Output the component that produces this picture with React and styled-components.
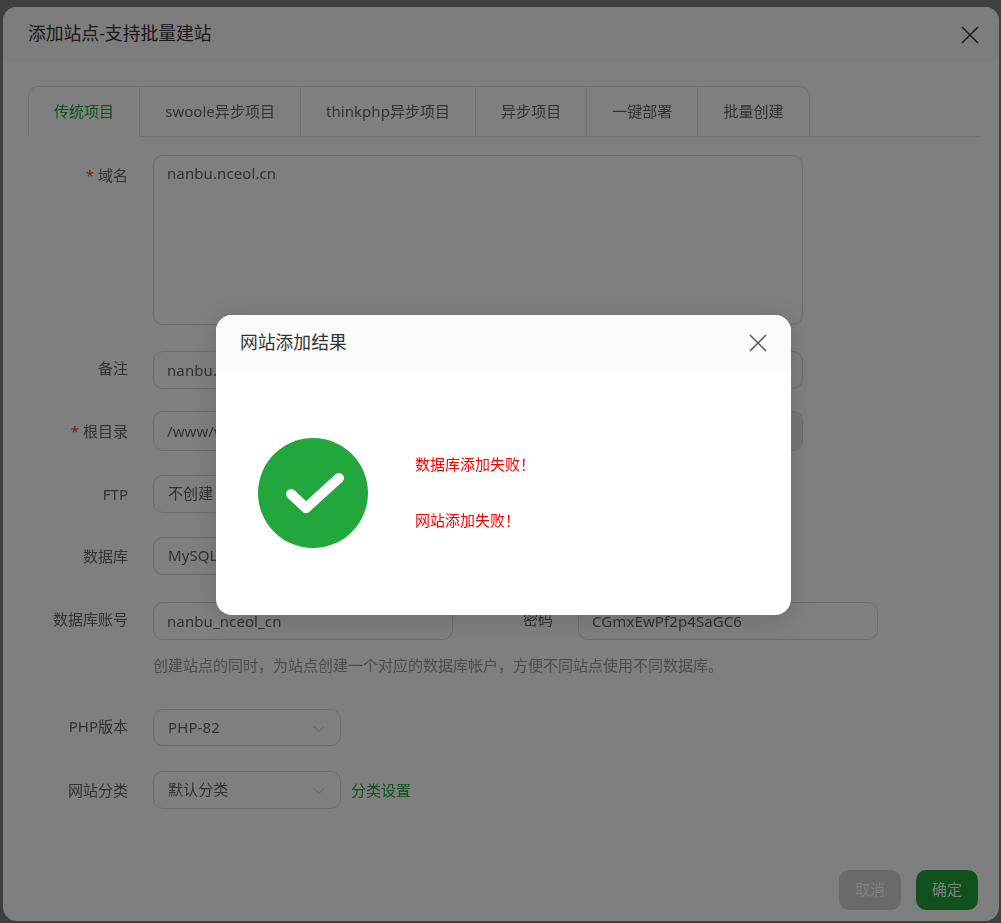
import React from "react";
import styled, { createGlobalStyle } from "styled-components";

const GlobalStyle = createGlobalStyle`
  html, body {
    margin: 0;
    height: 100%;
    background: #fff;
    font-family: "Noto Sans", "Noto Sans CJK SC", sans-serif;
    font-size: 15px;
    line-height: 20px;
    overflow: hidden;
  }
  * { box-sizing: border-box; }
`;

const tabs = ["传统项目", "swoole异步项目", "thinkphp异步项目", "异步项目", "一键部署", "批量创建"];

function CloseIcon() {
  return (
    <svg width="18" height="18" viewBox="0 0 18 18" fill="none" stroke="currentColor" strokeWidth="1.5">
      <path d="M1 1 L17 17 M17 1 L1 17" />
    </svg>
  );
}

function Chevron() {
  return (
    <ChevronSvg width="12" height="8" viewBox="0 0 12 8" fill="none" stroke="#c4c4c4" strokeWidth="1">
      <path d="M1 1.5 L6 6.5 L11 1.5" />
    </ChevronSvg>
  );
}

function SuccessIcon() {
  return (
    <svg width="110" height="110" viewBox="0 0 110 110">
      <circle cx="55" cy="55" r="55" fill="#22a73d" />
      <path d="M33 56 L48 70 L81 40" fill="none" stroke="#fff" strokeWidth="10" strokeLinecap="round" strokeLinejoin="round" />
    </svg>
  );
}

export default function App() {
  return (
    <>
      <GlobalStyle />
      <Backdrop>
        <Window>
          <WindowHeader>
            <WindowTitle>添加站点-支持批量建站</WindowTitle>
            <WindowClose><CloseIcon /></WindowClose>
          </WindowHeader>
          <WindowBody>
            <TabBar>
              {tabs.map((t, i) => (
                <Tab key={t} $active={i === 0} $first={i === 0} $last={i === tabs.length - 1}>{t}</Tab>
              ))}
            </TabBar>

            <Row $top={18}>
              <Label $alignTop><Star>*</Star>域名</Label>
              <TextArea>nanbu.nceol.cn</TextArea>
            </Row>
            <Row $top={26}>
              <Label $lift>备注</Label>
              <Input $width={650}>nanbu.nceol.cn</Input>
            </Row>
            <Row $top={22}>
              <Label><Star>*</Star>根目录</Label>
              <Input $width={650} $height={40}>
                /www/wwwroot/nanbu.nceol.cn
                <FolderAddon />
              </Input>
            </Row>
            <Row $top={24}>
              <Label>FTP</Label>
              <Select>不创建<Chevron /></Select>
            </Row>
            <Row $top={24}>
              <Label>数据库</Label>
              <Select>MySQL<Chevron /></Select>
            </Row>
            <Row $top={27}>
              <Label $lift>数据库账号</Label>
              <Input $width={300}>nanbu_nceol_cn</Input>
              <Label $lift>密码</Label>
              <Input $width={300}>CGmxEwPf2p4SaGC6</Input>
            </Row>
            <Hint>创建站点的同时，为站点创建一个对应的数据库帐户，方便不同站点使用不同数据库。</Hint>
            <Row $top={34}>
              <Label $lift>PHP版本</Label>
              <Select $height={37}>PHP-82<Chevron /></Select>
            </Row>
            <Row $top={25}>
              <Label>网站分类</Label>
              <Select>默认分类<Chevron /></Select>
              <TextLink>分类设置</TextLink>
            </Row>
          </WindowBody>
          <WindowFooter>
            <Button disabled>取消</Button>
            <Button $primary>确定</Button>
          </WindowFooter>
        </Window>
      </Backdrop>

      <Shade>
        <ResultDialog>
          <ResultHeader>
            <ResultTitle>网站添加结果</ResultTitle>
            <ResultClose><CloseIcon /></ResultClose>
          </ResultHeader>
          <ResultBody>
            <SuccessIcon />
            <Messages>
              <Message>数据库添加失败！</Message>
              <Message>网站添加失败！</Message>
            </Messages>
          </ResultBody>
        </ResultDialog>
      </Shade>
    </>
  );
}

const Backdrop = styled.div`
  position: fixed;
  inset: 0;
  background: rgba(0, 0, 0, 0.5);
  padding: 7px 2px 2px 3px;
  display: flex;
`;

const Window = styled.div`
  flex: 1;
  display: flex;
  flex-direction: column;
  background: #fff;
  border-radius: 14px;
  overflow: hidden;
`;

const WindowHeader = styled.div`
  height: 55px;
  flex: none;
  display: flex;
  align-items: center;
  justify-content: space-between;
  padding: 0 20px 0 25px;
  background: #fafafa;
`;

const WindowTitle = styled.div`
  font-size: 17.8px;
  color: #333;
  padding-bottom: 3px;
`;

const WindowClose = styled.div`
  display: flex;
  color: #333;
`;

const WindowBody = styled.div`
  flex: 1;
  padding: 24px 20px 0 25px;
`;

const TabBar = styled.div`
  display: flex;
  height: 51px;
  border-bottom: 1px solid #e4e4e4;
`;

const Tab = styled.div`
  height: 51px;
  padding: 0 25px 2px;
  display: flex;
  align-items: center;
  letter-spacing: 0.04px;
  color: ${(p) => (p.$active ? "#20a53a" : "#666")};
  background: #fff;
  border: 1px solid #e4e4e4;
  border-left-width: ${(p) => (p.$first ? "1px" : "0")};
  border-bottom-color: ${(p) => (p.$active ? "#fff" : "#e4e4e4")};
  border-top-left-radius: ${(p) => (p.$first ? "10px" : "0")};
  border-top-right-radius: ${(p) => (p.$last ? "10px" : "0")};
`;

const Row = styled.div`
  display: flex;
  align-items: center;
  margin-top: ${(p) => p.$top}px;
`;

const Label = styled.label`
  flex: none;
  width: 100px;
  margin-right: 25px;
  text-align: right;
  color: #666;
  align-self: ${(p) => (p.$alignTop ? "flex-start" : "center")};
  padding-top: ${(p) => (p.$alignTop ? "10px" : "0")};
  padding-bottom: ${(p) => (p.$lift ? "4px" : "0")};
`;

const Star = styled.span`
  color: #e53935;
  margin-right: 4px;
`;

const Field = styled.div`
  border: 1px solid #d9d9d9;
  border-radius: 10px;
  background: #fff;
  color: #666;
  letter-spacing: 0.1px;
`;

const TextArea = styled(Field)`
  width: 650px;
  height: 170px;
  padding: 7px 13px;
`;

const Input = styled(Field)`
  position: relative;
  overflow: hidden;
  width: ${(p) => p.$width}px;
  height: ${(p) => p.$height || 38}px;
  padding: 0 13px;
  display: flex;
  align-items: center;
  flex: none;
`;

const FolderAddon = styled.div`
  position: absolute;
  right: 0;
  top: 0;
  bottom: 0;
  width: 40px;
  background: #ecedf0;
`;

const Select = styled(Field)`
  width: 188px;
  height: ${(p) => p.$height || 38}px;
  padding: 0 15px 2px 14px;
  display: flex;
  align-items: center;
  justify-content: space-between;
`;

const ChevronSvg = styled.svg`
  margin-top: 4px;
`;

const Hint = styled.div`
  margin: 15px 0 0 125px;
  color: #999;
`;

const TextLink = styled.a`
  margin-left: 10px;
  color: #20a53a;
`;

const WindowFooter = styled.div`
  display: flex;
  justify-content: flex-end;
  gap: 15px;
  padding: 0 21px 11px 0;
`;

const Button = styled.button`
  width: 62px;
  height: 40px;
  border: 0;
  border-radius: 10px;
  font: inherit;
  color: #fff;
  padding: 0 0 3px;
  background: ${(p) => (p.$primary ? "#20a53a" : "#d4d4d4")};
`;

const Shade = styled.div`
  position: fixed;
  inset: 0;
  background: rgba(0, 0, 0, 0.5);
  display: flex;
  align-items: flex-start;
  justify-content: flex-start;
  padding: 315px 0 0 216px;
`;

const ResultDialog = styled.div`
  width: 575px;
  height: 300px;
  background: #fff;
  border-radius: 16px;
  overflow: hidden;
  box-shadow: 0 4px 24px rgba(0, 0, 0, 0.15);
`;

const ResultHeader = styled.div`
  height: 55px;
  display: flex;
  align-items: center;
  justify-content: space-between;
  padding: 0 24px;
  background: #fafafa;
`;

const ResultTitle = styled.div`
  font-size: 17.8px;
  color: #333;
  padding-bottom: 2px;
`;

const ResultClose = styled.div`
  display: flex;
  color: #555;
`;

const ResultBody = styled.div`
  display: flex;
  align-items: center;
  padding-left: 42px;
  height: 245px;
`;

const Messages = styled.div`
  display: flex;
  flex-direction: column;
  gap: 36px;
  margin: -2px 0 0 47px;
`;

const Message = styled.div`
  color: #ff0000;
`;
